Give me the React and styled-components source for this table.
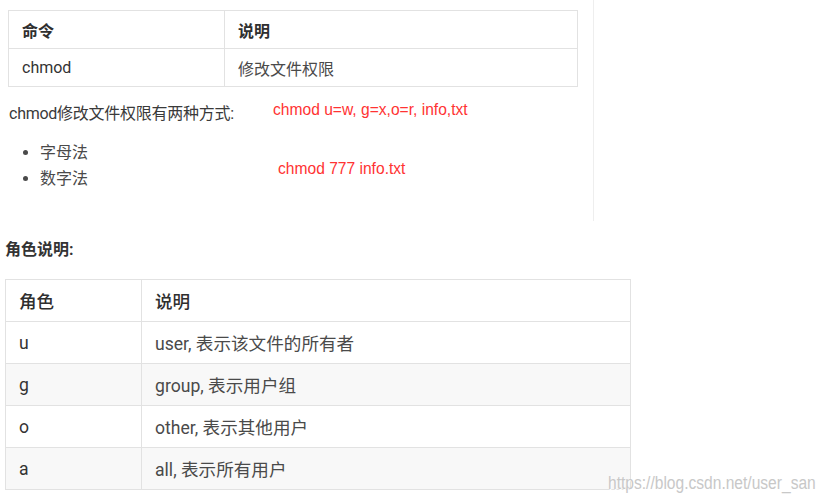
import React from "react";
import styled, { createGlobalStyle } from "styled-components";

const Global = createGlobalStyle`
  html, body { margin: 0; padding: 0; background: #fff; }
  body {
    font-family: Roboto, "Noto Sans CJK SC", sans-serif;
    color: #333;
    width: 824px;
    height: 501px;
    overflow: hidden;
  }
`;

const Page = styled.div`
  position: relative;
  width: 824px;
  height: 501px;
`;

const TopSection = styled.section`
  position: relative;
  box-sizing: border-box;
  width: 594px;
  height: 221px;
  padding-top: 10px;
  border-right: 1px solid #eeeeee;
`;

const Table = styled.table`
  border-collapse: collapse;
  margin-left: ${(p) => p.$left}px;
  width: ${(p) => p.$width}px;
  font-size: ${(p) => p.$fs}px;
`;

const Th = styled.th`
  box-sizing: border-box;
  height: ${(p) => p.$h}px;
  padding: 0 13px;
  text-align: left;
  font-weight: ${(p) => p.$weight || 600};
  color: #2f2f2f;
  border: 1px solid #e2e2e2;
  width: ${(p) => (p.$w ? `${p.$w}px` : "auto")};
`;

const Td = styled.td`
  box-sizing: border-box;
  height: ${(p) => p.$h}px;
  padding: 0 13px;
  color: ${(p) => (p.$dark ? "#333" : "#4a4a4a")};
  border: 1px solid #e2e2e2;
`;

const Tr = styled.tr`
  background: ${(p) => (p.$alt ? "#f8f8f8" : "#fff")};
`;

const Para = styled.p`
  margin: 14px 0 0 9px;
  font-size: 16px;
  line-height: 26px;
  letter-spacing: -0.25px;
  color: #3a3a3a;
`;

const List = styled.ul`
  margin: 13px 0 0 0;
  padding-left: 40px;
  font-size: 16px;
  line-height: 26px;
  color: #4a4a4a;
`;

const Note = styled.span`
  position: absolute;
  left: ${(p) => p.$x}px;
  top: ${(p) => p.$y}px;
  font-family: "Liberation Sans", "Noto Sans CJK SC", sans-serif;
  font-size: 15.6px;
  line-height: 20px;
  color: #ff3333;
  white-space: nowrap;
`;

const Heading = styled.h4`
  margin: 17px 0 17px 5px;
  font-size: 16px;
  line-height: 24px;
  font-weight: 700;
  color: #333;
`;

const Watermark = styled.span`
  position: absolute;
  left: 608px;
  top: 471px;
  font-family: "Liberation Sans", sans-serif;
  font-size: 18px;
  line-height: 24px;
  color: #c8c8c8;
  text-shadow: 1px 1px 0 #fff;
  white-space: nowrap;
  transform: scaleX(0.865);
  transform-origin: left center;
`;

const roles = [
  ["u", "user, 表示该文件的所有者"],
  ["g", "group, 表示用户组"],
  ["o", "other, 表示其他用户"],
  ["a", "all, 表示所有用户"],
];

export default function App() {
  return (
    <Page>
      <Global />
      <TopSection>
        <Table $left={8} $width={570} $fs={16}>
          <thead>
            <Tr>
              <Th $h={38} $w={216}>命令</Th>
              <Th $h={38}>说明</Th>
            </Tr>
          </thead>
          <tbody>
            <Tr>
              <Td $h={38} $dark>chmod</Td>
              <Td $h={38}>修改文件权限</Td>
            </Tr>
          </tbody>
        </Table>
        <Para>chmod修改文件权限有两种方式:</Para>
        <List>
          <li>字母法</li>
          <li>数字法</li>
        </List>
        <Note $x={273} $y={100}>chmod u=w, g=x,o=r, info,txt</Note>
        <Note $x={278} $y={159}>chmod 777 info.txt</Note>
      </TopSection>
      <Heading>角色说明:</Heading>
      <Table $left={5} $width={626} $fs={17.6}>
        <thead>
          <Tr>
            <Th $h={42} $w={136} $weight={500}>角色</Th>
            <Th $h={42} $weight={500}>说明</Th>
          </Tr>
        </thead>
        <tbody>
          {roles.map(([r, d], i) => (
            <Tr key={r} $alt={i % 2 === 1}>
              <Td $h={42} $dark>{r}</Td>
              <Td $h={42}>{d}</Td>
            </Tr>
          ))}
        </tbody>
      </Table>
      <Watermark>https://blog.csdn.net/user_san</Watermark>
    </Page>
  );
}
